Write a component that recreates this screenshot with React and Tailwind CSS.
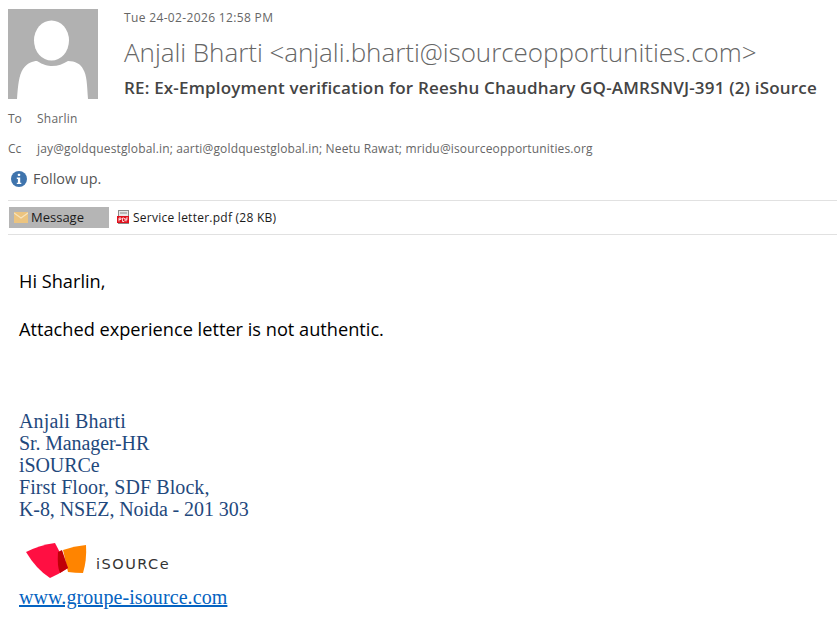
const ui = { fontFamily: '"Open Sans", "Noto Sans", sans-serif' };

function Avatar() {
  return (
    <svg width="90" height="90" viewBox="0 0 90 90" className="block shrink-0">
      <rect width="90" height="90" fill="#b1b1b1" />
      <ellipse cx="43.5" cy="31.5" rx="17.5" ry="20" fill="#fff" />
      <path d="M9 90 C10 76 11 66 15 60 C19 54 25 52 29 52 C35 56 40 57 44 57 C50 57 55 55 60 52 C67 52 73 55 75 60 C79 66 79 76 80 90 Z" fill="#fff" />
    </svg>
  );
}

function Envelope() {
  return (
    <svg width="14" height="11" viewBox="0 0 14 11" className="block">
      <rect width="14" height="11" fill="#ecc47f" />
      <path d="M0 1 L7 6 L14 1" fill="none" stroke="#f7e3bd" strokeWidth="1.2" />
    </svg>
  );
}

function PdfIcon() {
  return (
    <svg width="13" height="15" viewBox="0 0 13 15" className="block">
      <rect x="1.5" y="0.5" width="10" height="13" fill="#e8e8e8" stroke="#8a8a8a" strokeWidth="1" />
      <path d="M3 3H10" stroke="#8a8a8a" />
      <rect x="0" y="6" width="12" height="7" fill="#e0101c" />
      <path d="M2 8H4V9.5H2M2 8V11.5M5.5 8V11.5H7L8 10.5V9L7 8H5.5M9 8V11.5M9 8H11M9 9.7H10.5" fill="none" stroke="#fff" strokeWidth="0.8" />
    </svg>
  );
}

function Logo() {
  return (
    <svg width="64" height="36" viewBox="0 0 64 36" className="block">
      <path d="M37 7 Q48 3 60 2 Q61 17 57 30 Q49 30 42 29 Z" fill="#ff8400" />
      <path d="M0 9 Q14 2 29 0 L42 25 Q33 31 24 35 Q10 26 0 9 Z" fill="#ff0f42" />
      <path d="M32 9 L36 7 L42 25 L34 30 Q31 24 32 9 Z" fill="#c00008" />
    </svg>
  );
}

export default function App() {
  return (
    <div className="w-[837px] h-[628px] bg-white overflow-hidden text-[#444444]" style={ui}>
      <div className="flex pl-2 pt-[9px] h-[102px]">
        <Avatar />
        <div className="ml-[26px] flex flex-col">
          <div className="text-[12px] leading-[18px] text-[#666666] whitespace-nowrap tracking-[0.35px]">Tue 24-02-2026 12:58 PM</div>
          <div className="text-[26px] leading-[32px] mt-[9px] font-light text-[#666666] whitespace-nowrap tracking-[-0.04px]">Anjali Bharti &lt;anjali.bharti@isourceopportunities.com&gt;</div>
          <div className="text-[17px] leading-[22px] mt-[9px] font-semibold text-[#444444] whitespace-nowrap tracking-[0.18px]">RE: Ex-Employment verification for Reeshu Chaudhary GQ-AMRSNVJ-391 (2) iSource</div>
        </div>
      </div>
      <div className="flex pl-2 h-[30px] items-center mt-[2px] text-[12px]">
        <span className="w-[29px] text-[#666666]">To</span>
        <span className="text-[#666666] tracking-[0.25px]">Sharlin</span>
      </div>
      <div className="flex pl-2 h-[30px] items-center text-[12px]">
        <span className="w-[29px] text-[#666666]">Cc</span>
        <span className="text-[#666666] whitespace-nowrap tracking-[0.15px]">jay@goldquestglobal.in; aarti@goldquestglobal.in; Neetu Rawat; mridu@isourceopportunities.org</span>
      </div>
      <div className="flex items-center pl-[11px] h-[30px] text-[14.4px] text-[#555555]">
        <svg width="16" height="16" viewBox="0 0 16 16" className="block">
          <circle cx="8" cy="8" r="8" fill="#3f74ad" />
          <rect x="6.7" y="2.7" width="2.6" height="2.4" rx="1" fill="#fff" />
          <path d="M5.8 6.6H9.2V11.7H10.3V13H5.8V11.7H6.9V7.9H5.8Z" fill="#fff" />
        </svg>
        <span className="ml-[6px]">Follow up.</span>
      </div>
      <div className="ml-2 mt-[6px] border-t border-[#e1e1e1] border-b h-[35px] flex items-center">
        <div className="ml-px w-[100px] h-[21px] bg-[#b5b5b5] flex items-center pl-[5px] text-[13px] text-[#1a1a1a]">
          <Envelope />
          <span className="ml-[3px] mt-px">Message</span>
        </div>
        <div className="ml-2 flex items-center text-[12px] text-[#1a1a1a] whitespace-nowrap">
          <PdfIcon />
          <span className="ml-[3px] mt-px tracking-[0.25px]">Service letter.pdf (28 KB)</span>
        </div>
      </div>
      <div className="pl-[19px] mt-[34px] text-[18.2px] leading-[24px] text-black">
        <div>Hi Sharlin,</div>
        <div className="mt-[24px]">Attached experience letter is not authentic.</div>
      </div>
      <div className="pl-[19px] mt-[69px] text-[#1f497d] text-[20px] leading-[22px]" style={{ fontFamily: '"Liberation Serif", serif' }}>
        <div className="tracking-[0.15px]">Anjali Bharti</div>
        <div className="tracking-[-0.12px]">Sr. Manager-HR</div>
        <div className="tracking-[-0.1px]">iSOURCe</div>
        <div className="tracking-[0.08px]">First Floor, SDF Block,</div>
        <div className="tracking-[-0.08px]">K-8, NSEZ, Noida - 201 303</div>
        <div className="flex items-center mt-[23px] ml-[7px] h-[36px] text-[#333333]">
          <Logo />
          <span className="ml-[6px] mt-[5px] text-[14.5px] tracking-[1.5px]" style={{ fontFamily: '"DejaVu Sans", sans-serif' }}>iSOURCe</span>
        </div>
        <a className="block mt-[7px] text-[#0563c1] underline tracking-[0.09px]" href="#">www.groupe-isource.com</a>
      </div>
    </div>
  );
}
